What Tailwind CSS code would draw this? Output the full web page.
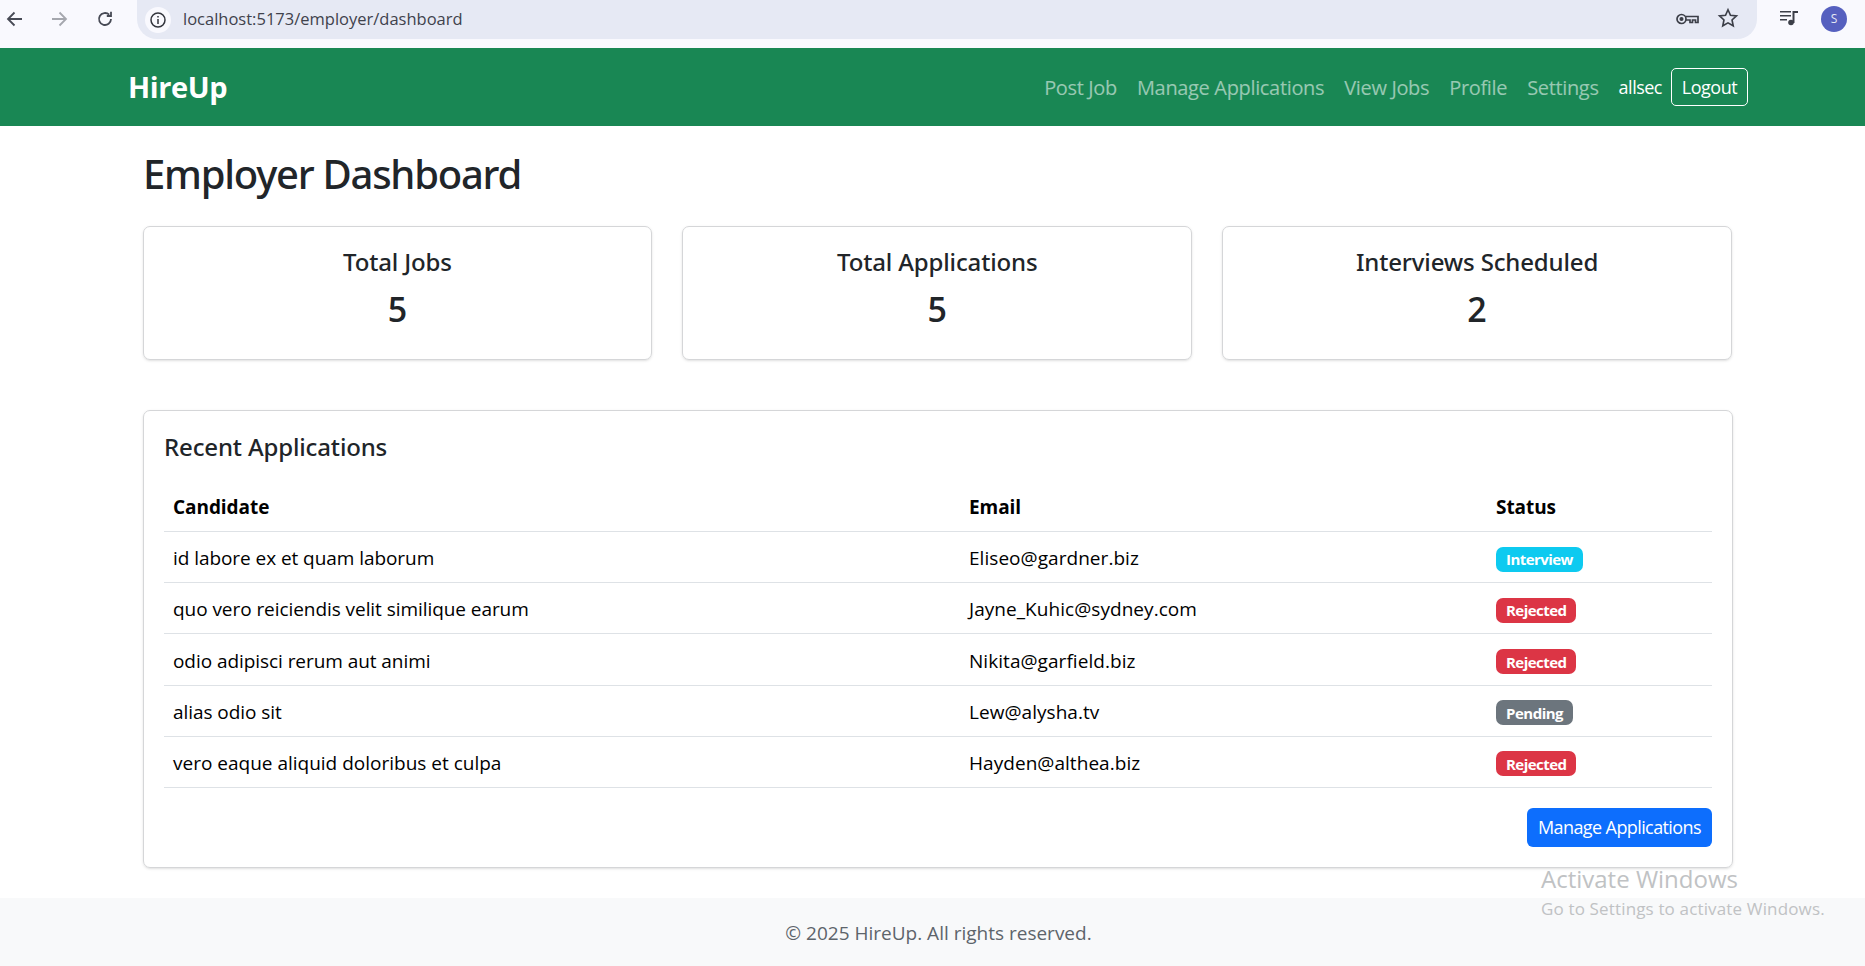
<!doctype html>
<html><head><meta charset="utf-8"><script src="https://cdn.jsdelivr.net/npm/@tailwindcss/browser@4"></script></head>
<body class="font-['Open_Sans',sans-serif] text-[#212529] bg-white h-[966px] overflow-hidden relative">
<div class="h-[48px] bg-[#f9f9fe] flex items-start relative">
  <div class="h-[37px] flex items-center pl-[5px] gap-[18px]">
    <svg class="w-[20px] h-[20px]" viewBox="0 0 20 20" fill="none" stroke="#474a55" stroke-width="1.8"><path d="M17 10H3.5M9.5 3.5 3 10l6.5 6.5"/></svg>
    <svg class="w-[20px] h-[20px] ml-[5.500px]" viewBox="0 0 20 20" fill="none" stroke="#a5a7ae" stroke-width="1.8"><path d="M3 10h13.5M10.500 3.500 17 10l-6.500 6.500"/></svg>
    <svg class="w-[20px] h-[20px] ml-[8px]" viewBox="0 0 20 20" fill="none" stroke="#474a55" stroke-width="1.8"><path d="M16 10a6 6 0 1 1-1.800-4.300"/><path d="M16 2.800V7h-4.200" /></svg>
  </div>
  <div class="absolute left-[137px] top-0 w-[1620px] h-[39px] bg-[#e6e9f4] rounded-bl-[20px] rounded-br-[20px] flex items-center pl-[8px]">
    <div class="w-[26px] h-[26px] rounded-full bg-[#f9f9fe] flex items-center justify-center">
      <svg class="w-[18px] h-[18px]" viewBox="0 0 18 18" fill="none" stroke="#33353d" stroke-width="1.500"><circle cx="9" cy="9" r="7"/><path d="M9 8v5M9 5v1.600"/></svg>
    </div>
    <span class="ml-[12px] -mt-[1px] text-[16.500px] text-[#3f424c]">localhost:5173/employer/dashboard</span>
  </div>
  <svg class="absolute left-[1675px] top-[9px] w-[24px] h-[20px]" viewBox="0 0 24 20" fill="none" stroke="#3c3f48" stroke-width="1.700"><circle cx="6.500" cy="10" r="4.500"/><circle cx="6.500" cy="10" r="1.200" fill="#3c3f48"/><path d="M11 7.500h12v6h-2.500V11h-3v2.500h-2.500V11H11"/></svg>
  <svg class="absolute left-[1717px] top-[7px] w-[22px] h-[22px]" viewBox="0 0 24 24" fill="none" stroke="#3c3f48" stroke-width="1.800"><path d="m12 3 2.700 6 6.500.7-4.800 4.400 1.300 6.400L12 17.300 6.300 20.500l1.300-6.400-4.800-4.400 6.500-.7z"/></svg>
  <svg class="absolute left-[1779px] top-[8px] w-[20px] h-[20px]" viewBox="0 0 20 20" fill="#3c3f48"><path d="M1 3h11v1.600H1zM1 7h11v1.600H1zM1 11h7v1.600H1z"/><circle cx="12" cy="14.500" r="2.800"/><path d="M13.500 3H19v2h-3.500v10h-2z"/></svg>
  <div class="absolute left-[1821px] top-[6px] w-[26px] h-[26px] rounded-full bg-[#5660bf] text-[#e6e9f4] text-[12px] flex items-center justify-center">S</div>
</div>

<nav class="h-[78px] bg-[#198754] flex items-center justify-between pl-[128px] pr-[117px]">
  <a class="text-[29px] font-bold text-white tracking-[-0.4px]">HireUp</a>
  <div class="flex items-center">
    <div class="flex items-center gap-[20px] pt-[2px] text-[20px] tracking-[-0.34px] text-white/55">
      <a>Post Job</a><a>Manage Applications</a><a>View Jobs</a><a>Profile</a><a>Settings</a>
    </div>
    <span class="ml-[20px] text-[18px] tracking-[-0.5px] text-white">allsec</span>
    <button class="ml-[9px] w-[77px] h-[38px] border border-white rounded-[5px] text-white text-[18px] tracking-[-0.5px]">Logout</button>
  </div>
</nav>

<main class="px-[143px] pr-[132px]">
  <h1 class="mt-[19px] h-[60px] font-['Noto_Sans',sans-serif] text-[40px] leading-[58px] font-medium tracking-[-1.250px]">Employer Dashboard</h1>
  <div class="mt-[21px] -ml-[0.500px] mr-[1px] grid grid-cols-3 gap-[30px]">
    <div class="h-[134px] border border-[#d5d6d8] rounded-[7px] shadow-sm flex flex-col items-center pt-[19px]"><div class="font-['Noto_Sans',sans-serif] text-[24px] leading-[32px] font-medium tracking-[-0.15px]">Total Jobs</div><div class="mt-[8px] text-[34px] leading-[46px] font-semibold">5</div></div>
    <div class="h-[134px] border border-[#d5d6d8] rounded-[7px] shadow-sm flex flex-col items-center pt-[19px]"><div class="font-['Noto_Sans',sans-serif] text-[24px] leading-[32px] font-medium tracking-[-0.15px]">Total Applications</div><div class="mt-[8px] text-[34px] leading-[46px] font-semibold">5</div></div>
    <div class="h-[134px] border border-[#d5d6d8] rounded-[7px] shadow-sm flex flex-col items-center pt-[19px]"><div class="font-['Noto_Sans',sans-serif] text-[24px] leading-[32px] font-medium tracking-[-0.15px]">Interviews Scheduled</div><div class="mt-[8px] text-[34px] leading-[46px] font-semibold">2</div></div>
  </div>
  <section class="mt-[50px] h-[458px] border border-[#d5d6d8] rounded-[7px] shadow-sm px-[20px] pt-[20px]">
    <h2 class="font-['Noto_Sans',sans-serif] text-[24px] leading-[32px] font-medium tracking-[-0.15px]">Recent Applications</h2>
    <table class="mt-[17px] w-full table-fixed text-[19px] tracking-[-0.06px] text-black">
      <colgroup><col class="w-[797px]"><col class="w-[527px]"><col></colgroup>
      <thead><tr class="h-[51px] border-b border-[#dee2e6] text-left"><th class="px-[9px] pt-[3px] font-bold">Candidate</th><th class="px-[8px] pt-[3px] font-bold">Email</th><th class="px-[8px] pt-[3px] font-bold">Status</th></tr></thead>
      <tbody>
        <tr class="h-[51.400px] border-b border-[#dee2e6]"><td class="px-[9px] pt-[3px]">id labore ex et quam laborum</td><td class="px-[8px] pt-[3px] tracking-[0.05px]">Eliseo@gardner.biz</td><td class="px-[8px] pt-[3px]"><span class="inline-flex items-center h-[25px] px-[10px] rounded-[7px] bg-[#0dcaf0] text-white text-[15px] font-bold tracking-[-0.55px]">Interview</span></td></tr>
        <tr class="h-[51.400px] border-b border-[#dee2e6]"><td class="px-[9px] pt-[2px]">quo vero reiciendis velit similique earum</td><td class="px-[8px] pt-[2px] tracking-[0.05px]">Jayne_Kuhic@sydney.com</td><td class="px-[8px] pt-[2px]"><span class="inline-flex items-center h-[25px] px-[10px] rounded-[7px] bg-[#dc3545] text-white text-[15px] font-bold tracking-[-0.55px]">Rejected</span></td></tr>
        <tr class="h-[51.400px] border-b border-[#dee2e6]"><td class="px-[9px] pt-[3px]">odio adipisci rerum aut animi</td><td class="px-[8px] pt-[3px] tracking-[0.05px]">Nikita@garfield.biz</td><td class="px-[8px] pt-[3px]"><span class="inline-flex items-center h-[25px] px-[10px] rounded-[7px] bg-[#dc3545] text-white text-[15px] font-bold tracking-[-0.55px]">Rejected</span></td></tr>
        <tr class="h-[51.400px] border-b border-[#dee2e6]"><td class="px-[9px] pt-[2px]">alias odio sit</td><td class="px-[8px] pt-[2px] tracking-[0.05px]">Lew@alysha.tv</td><td class="px-[8px] pt-[2px]"><span class="inline-flex items-center h-[25px] px-[10px] rounded-[7px] bg-[#6c757d] text-white text-[15px] font-bold tracking-[-0.5px]">Pending</span></td></tr>
        <tr class="h-[51.400px] border-b border-[#dee2e6]"><td class="px-[9px] pt-[1px] tracking-[0px]">vero eaque aliquid doloribus et culpa</td><td class="px-[8px] pt-[1px] tracking-[0.05px]">Hayden@althea.biz</td><td class="px-[8px] pt-[1px]"><span class="inline-flex items-center h-[25px] px-[10px] rounded-[7px] bg-[#dc3545] text-white text-[15px] font-bold tracking-[-0.55px]">Rejected</span></td></tr>
      </tbody>
    </table>
    <div class="mt-[20px] flex justify-end"><button class="w-[185px] h-[39px] rounded-[6px] bg-[#0d6efd] text-white text-[18px] tracking-[-0.6px]">Manage Applications</button></div>
  </section>
</main>
<footer class="absolute left-0 right-0 top-[898px] h-[68px] pt-[3px] bg-[#f8f9fa] flex items-center justify-center text-[19px] text-[#5d646b]">
  <span class="ml-[12px]">© 2025 HireUp. All rights reserved.</span>
</footer>
<div class="absolute left-[1541px] top-[863px] text-[#c0c2c4] pointer-events-none">
  <div class="text-[24px] leading-[32px]">Activate Windows</div>
  <div class="text-[17px] leading-[26px] mt-[1px] tracking-[0.15px]">Go to Settings to activate Windows.</div>
</div>
</body></html>
